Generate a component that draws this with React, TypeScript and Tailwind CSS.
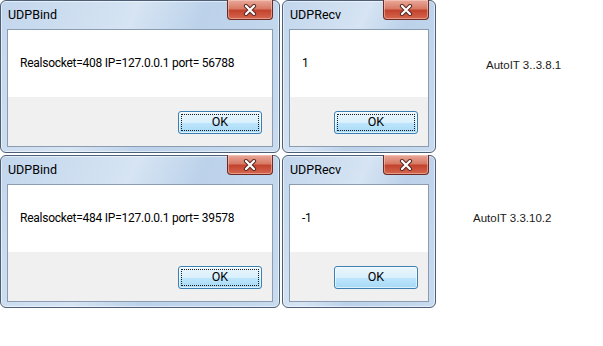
import type { ReactNode } from "react";

type DialogProps = {
  title: string;
  message: string;
  width: string;
  focused?: boolean;
};

function CloseButton() {
  return (
    <div className="flex h-[20px] w-[46px] items-center justify-center rounded-b-[4px] border border-t-0 border-[#6b2a22] bg-[linear-gradient(to_bottom,#e9a99a_0%,#d87a66_45%,#c3432e_55%,#d5674f_100%)] shadow-[inset_0_0_0_1px_rgba(255,220,210,0.45)]">
      <svg width="14" height="12" viewBox="0 0 14 12">
        <path
          d="M3 2 L11 10 M11 2 L3 10"
          stroke="#5a2a24"
          strokeWidth="4.2"
          strokeLinecap="round"
        />
        <path d="M3 2 L11 10 M11 2 L3 10" stroke="#ffffff" strokeWidth="2.2" strokeLinecap="round" />
      </svg>
    </div>
  );
}

function OkButton({ focused }: { focused?: boolean }) {
  return (
    <button
      type="button"
      className="flex h-[23px] w-[84px] items-center justify-center rounded-[3px] border border-[#3c7fb1] bg-[linear-gradient(to_bottom,#eaf6fd_0%,#d9f0fc_50%,#bee6fd_51%,#a7d9f5_100%)] p-[2px] shadow-[inset_0_0_0_1px_rgba(255,255,255,0.6)]"
    >
      <span
        className={`flex h-full w-full items-center justify-center text-[12.5px] text-black ${
          focused ? "border border-dotted border-[#1a1a1a]" : ""
        }`}
      >
        OK
      </span>
    </button>
  );
}

function MsgDialog({ title, message, width, focused }: DialogProps) {
  return (
    <div
      className={`${width} flex h-[153px] shrink-0 flex-col rounded-[6px] border border-[#4d5f76] bg-[linear-gradient(115deg,#c2d6ec_0%,#d6e4f3_40%,#bcd2ea_60%,#c8dbef_100%)] px-[6px] shadow-[inset_0_0_0_1px_rgba(255,255,255,0.55)]`}
    >
      <div className="flex h-[28px] items-start justify-between">
        <span className="pl-[1px] pt-[6px] text-[12.5px] leading-[16px] text-black">{title}</span>
        <div className="-mt-px">
          <CloseButton />
        </div>
      </div>
      <div className="flex h-[118px] flex-col border border-[#8b9cb2]">
        <div className="h-[67px] bg-white pl-[12px] pt-[25px] text-[12px] leading-[16px] tracking-[-0.25px] text-black">
          {message}
        </div>
        <div className="flex flex-1 items-start justify-end bg-[#f0f0f0] pr-[10px] pt-[14px]">
          <OkButton focused={focused} />
        </div>
      </div>
    </div>
  );
}

function Row({ children, label, labelClass }: { children: ReactNode; label: string; labelClass: string }) {
  return (
    <div className="flex items-start">
      {children}
      <div
        className={`${labelClass} font-['Liberation_Sans',Arial,sans-serif] text-[11.5px] leading-[14px] text-[#1a1a1a]`}
      >
        {label}
      </div>
    </div>
  );
}

export default function App() {
  return (
    <div className="h-[346px] w-[603px] bg-white font-['Roboto',sans-serif]">
      <div className="flex flex-col gap-[2px]">
        <Row label="AutoIT 3..3.8.1" labelClass="ml-[50px] pt-[58px]">
          <div className="flex gap-[2px]">
            <MsgDialog
              title="UDPBind"
              message="Realsocket=408 IP=127.0.0.1 port= 56788"
              width="w-[280px]"
              focused
            />
            <MsgDialog title="UDPRecv" message="1" width="w-[154px]" focused />
          </div>
        </Row>
        <Row label="AutoIT 3.3.10.2" labelClass="ml-[37px] pt-[56px]">
          <div className="flex gap-[2px]">
            <MsgDialog
              title="UDPBind"
              message="Realsocket=484 IP=127.0.0.1 port= 39578"
              width="w-[280px]"
              focused
            />
            <MsgDialog title="UDPRecv" message="-1" width="w-[154px]" />
          </div>
        </Row>
      </div>
    </div>
  );
}
